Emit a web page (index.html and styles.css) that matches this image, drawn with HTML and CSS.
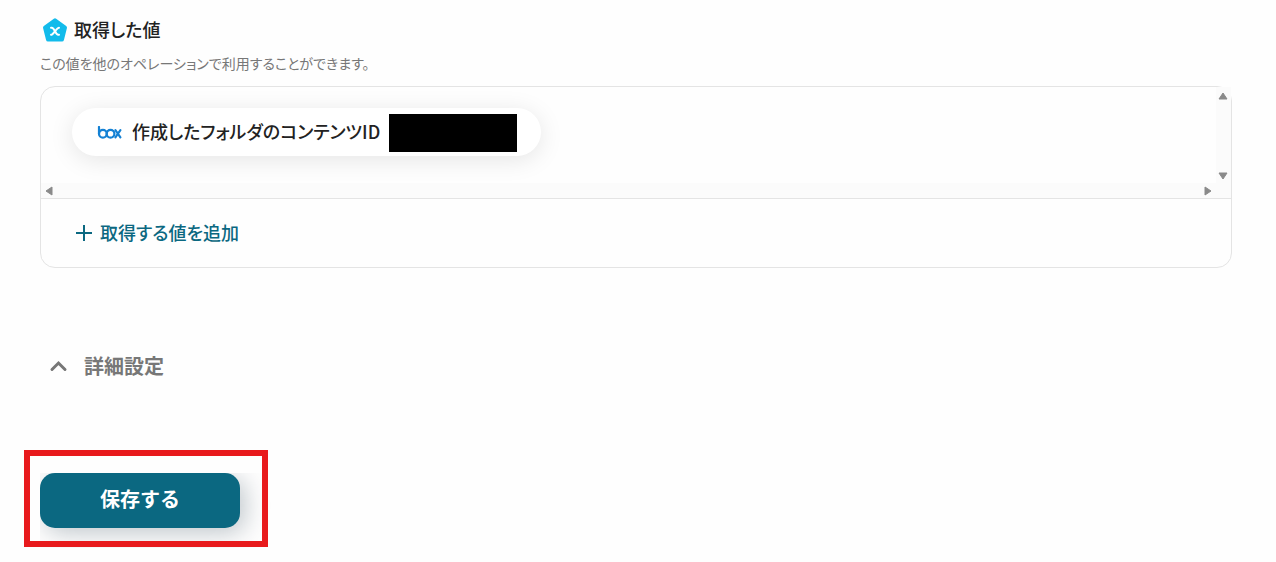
FILE: index.html
```html
<!DOCTYPE html>
<html lang="ja">
<head>
	<meta charset="utf-8">
	<title>取得した値</title>
	<link rel="stylesheet" href="styles.css">
</head>
<body>
	<main class="page">
		<!-- output values -->
		<section class="output">
			<h2 class="title">
				<svg class="title-icon" width="26" height="26" viewBox="0 0 26 26" aria-hidden="true">
					<path d="M13 3.4 L23 10.6 L20 22.6 H6 L3 10.6 Z" fill="#12bbeb" stroke="#12bbeb" stroke-width="4" stroke-linejoin="round"/>
					<path d="M9 10.8 H9.8 C12.6 10.8 13.4 17.8 16.2 17.8 H17" fill="none" stroke="#fff" stroke-width="2" stroke-linecap="round"/>
					<path d="M17 10.8 C14.6 10.8 11.4 17.8 9 17.8" fill="none" stroke="#fff" stroke-width="2" stroke-linecap="round"/>
				</svg>
				<span class="title-text">取得した値</span>
			</h2>
			<p class="desc">この値を他のオペレーションで利用することができます。</p>
			<div class="panel">
				<div class="scroll">
					<div class="scroll-body">
						<div class="chip">
							<svg class="chip-logo" width="25" height="14" viewBox="0 0 25 14" role="img" aria-label="box">
								<g fill="none" stroke="#1481d4" stroke-width="2.2" stroke-linecap="round">
									<path d="M2 1 V8"/>
									<circle cx="5.9" cy="7.8" r="3.9"/>
									<circle cx="13.5" cy="7.8" r="3.9"/>
									<path d="M18.4 4.2 L23.4 11.4 M23.4 4.2 L18.4 11.4"/>
								</g>
							</svg>
							<span class="chip-name">作成したフォルダのコンテンツID</span>
							<span class="chip-mask"></span>
						</div>
					</div>
					<div class="bar-y">
						<svg width="10" height="8" viewBox="0 0 10 8"><path d="M5 1 L9 7 H1 Z"/></svg>
						<svg width="10" height="8" viewBox="0 0 10 8"><path d="M5 7 L9 1 H1 Z"/></svg>
					</div>
					<div class="bar-x">
						<svg width="8" height="10" viewBox="0 0 8 10"><path d="M1 5 L7 1 V9 Z"/></svg>
						<svg width="8" height="10" viewBox="0 0 8 10"><path d="M7 5 L1 1 V9 Z"/></svg>
					</div>
					<div class="bar-corner"></div>
				</div>
				<div class="panel-foot">
					<button type="button" class="add">
						<svg width="16" height="16" viewBox="0 0 16 16" aria-hidden="true"><path d="M8 0 V16 M0 8 H16" stroke="currentColor" stroke-width="2"/></svg>
						<span class="add-text">取得する値を追加</span>
					</button>
				</div>
			</div>
		</section>

		<!-- advanced settings -->
		<button type="button" class="detail">
			<svg width="20" height="14" viewBox="0 0 20 14" aria-hidden="true"><path d="M4 10.5 L10.5 4 L17 10.5" fill="none" stroke="currentColor" stroke-width="3" stroke-linecap="round"/></svg>
			詳細設定
		</button>

		<!-- save -->
		<div class="actions">
			<div class="save-wrap"><button type="button" class="save">保存する</button></div>
			<span class="mark"></span>
		</div>
	</main>
</body>
</html>
```
FILE: styles.css
```css
*{margin:0;padding:0;box-sizing:border-box;}
body{background:#fefefe;color:#222;font-family:"Noto Sans CJK JP",sans-serif;font-feature-settings:"palt";}
button{border:0;background:none;font-family:inherit;font-feature-settings:inherit;cursor:pointer;}
svg{flex:none;display:block;}
.page{padding:16px 44px 20px 40px;}

.title{display:flex;align-items:center;gap:6px;height:28px;padding-left:2px;}
.title-text,.chip-name,.add-text{padding-bottom:3px;font-size:18px;font-weight:500;line-height:28px;white-space:nowrap;}
.desc{margin-top:9px;font-size:14px;line-height:20px;color:#777;}

.panel{margin-top:13px;border:1px solid #e4e4e4;border-radius:15px;}
.scroll{display:grid;grid-template-columns:1fr 15px;grid-template-rows:96px 15px;border-bottom:1px solid #e4e4e4;}
.scroll-body{padding:21px 31px;overflow:hidden;border-top-left-radius:14px;}
.chip{display:flex;align-items:center;width:469px;max-width:100%;height:48px;padding:2px 24px 0 25px;border-radius:24px;background:#fff;box-shadow:0 4px 24px rgba(0,0,0,.1);}
.chip-logo{margin-right:10px;}
.chip-mask{width:128px;height:38px;margin-left:auto;background:#000;}
.chip-name{padding-bottom:5px;}

/* scrollbars */
.bar-y,.bar-x{display:flex;align-items:center;justify-content:space-between;background:#fbfbfb;fill:#8a8a8a;stroke:#8a8a8a;stroke-width:1;stroke-linejoin:round;}
.bar-y{flex-direction:column;padding:5px 1px 3px 0;}
.bar-x{padding:0 4px;}
.bar-corner{background:#fbfbfb;}

.panel-foot{display:flex;align-items:center;height:68px;padding:0 35px;}
.add{display:flex;align-items:center;gap:8px;color:#0b6881;}

.detail{display:flex;align-items:center;gap:16px;margin-top:83px;padding-left:8px;color:#777;font-size:20px;font-weight:700;line-height:30px;}

.actions{position:relative;width:200px;margin-top:92px;}
.save-wrap{clip-path:inset(0 -40px -40px 0);}
.save{display:block;width:100%;height:55px;padding-bottom:3px;border-radius:15px;background:#0b6881;color:#fff;font-size:20px;font-weight:700;font-feature-settings:normal;line-height:30px;box-shadow:5px 5px 25px rgba(0,30,50,.25);}
.mark{position:absolute;top:-23px;right:-28px;bottom:-19px;left:-16px;border:6px solid #e81a1c;pointer-events:none;}
```
